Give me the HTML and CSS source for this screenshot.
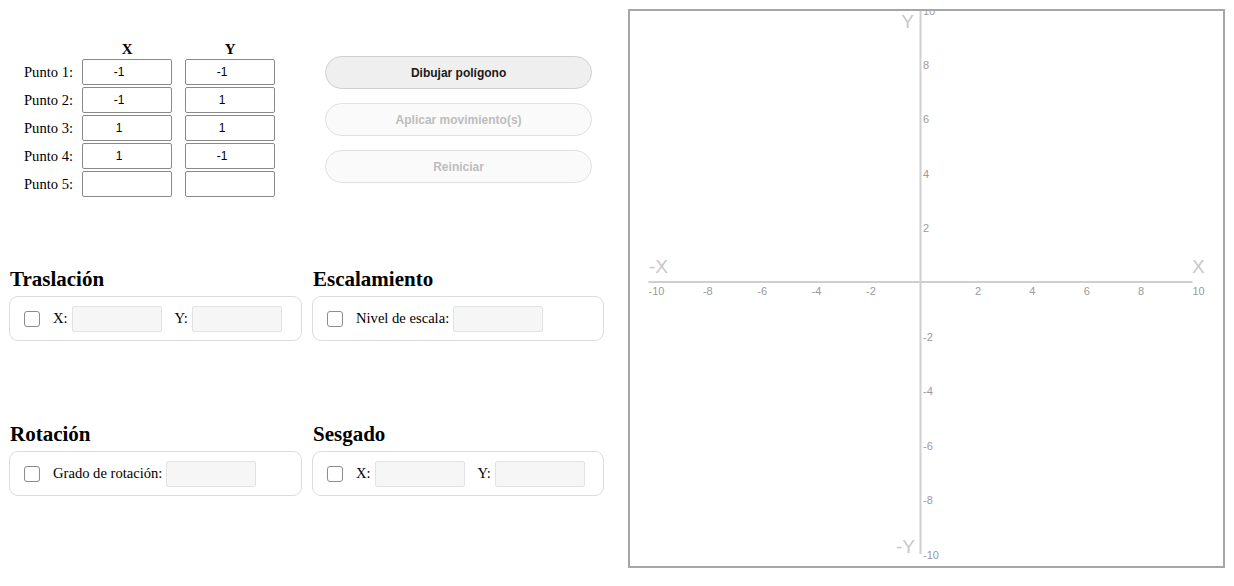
FILE: index.html
```html
<!DOCTYPE html>
<html lang="es">
<head>
<meta charset="utf-8">
<title>Transformaciones</title>
<link rel="stylesheet" href="styles.css">
</head>
<body>
<div class="page">
  <div class="left">
    <div class="top">
      <table class="pts">
        <tr><th class="lbl"></th><th>X</th><th class="c2">Y</th></tr>
        <tr><td class="lbl">Punto 1:</td><td><input class="num" type="text" value="-1"></td><td class="c2"><input class="num" type="text" value="-1"></td></tr>
        <tr><td class="lbl">Punto 2:</td><td><input class="num" type="text" value="-1"></td><td class="c2"><input class="num" type="text" value="1"></td></tr>
        <tr><td class="lbl">Punto 3:</td><td><input class="num" type="text" value="1"></td><td class="c2"><input class="num" type="text" value="1"></td></tr>
        <tr><td class="lbl">Punto 4:</td><td><input class="num" type="text" value="1"></td><td class="c2"><input class="num" type="text" value="-1"></td></tr>
        <tr><td class="lbl">Punto 5:</td><td><input class="num" type="text" value=""></td><td class="c2"><input class="num" type="text" value=""></td></tr>
      </table>
      <div class="btns">
        <button class="btn">Dibujar polígono</button>
        <button class="btn" disabled>Aplicar movimiento(s)</button>
        <button class="btn" disabled>Reiniciar</button>
      </div>
    </div>
    <div class="ops">
      <section class="op">
        <h3>Traslación</h3>
        <div class="box"><span class="chk"></span><label class="lab">X:</label><input class="field" type="text"><label class="lab gap">Y:</label><input class="field" type="text"></div>
      </section>
      <section class="op">
        <h3>Escalamiento</h3>
        <div class="box"><span class="chk"></span><label class="lab">Nivel de escala:</label><input class="field" type="text"></div>
      </section>
      <section class="op">
        <h3>Rotación</h3>
        <div class="box"><span class="chk"></span><label class="lab">Grado de rotación:</label><input class="field" type="text"></div>
      </section>
      <section class="op">
        <h3>Sesgado</h3>
        <div class="box"><span class="chk"></span><label class="lab">X:</label><input class="field" type="text"><label class="lab gap">Y:</label><input class="field" type="text"></div>
      </section>
    </div>
  </div>
  <div class="graph">
    <svg class="plane" width="593" height="555" viewBox="0 0 593 555" xmlns="http://www.w3.org/2000/svg">
      <line x1="18.5" y1="271" x2="562.5" y2="271" class="axis"/>
      <line x1="290.5" y1="0" x2="290.5" y2="543" class="axis"/>
      <g class="tick">
        <text x="18.5" y="284">-10</text>
        <text x="72.9" y="284">-8</text>
        <text x="127.3" y="284">-6</text>
        <text x="181.7" y="284">-4</text>
        <text x="236.1" y="284">-2</text>
        <text x="344.9" y="284">2</text>
        <text x="399.3" y="284">4</text>
        <text x="453.7" y="284">6</text>
        <text x="508.1" y="284">8</text>
        <text x="562.5" y="284">10</text>
        <text x="293" y="3.5">10</text>
        <text x="293" y="57.9">8</text>
        <text x="293" y="112.3">6</text>
        <text x="293" y="166.7">4</text>
        <text x="293" y="221.1">2</text>
        <text x="293" y="329.9">-2</text>
        <text x="293" y="384.3">-4</text>
        <text x="293" y="438.7">-6</text>
        <text x="293" y="493.1">-8</text>
        <text x="293" y="547.5">-10</text>
      </g>
      <g class="big">
        <text x="19" y="262">-X</text>
        <text x="562" y="262">X</text>
        <text x="284" y="17" text-anchor="end">Y</text>
        <text x="285" y="542" text-anchor="end">-Y</text>
      </g>
    </svg>
  </div>
</div>
</body>
</html>
```
FILE: styles.css
```css
body {
  margin: 0;
  background: #fff;
  color: #000;
  font-family: "Liberation Serif", "Times New Roman", serif;
}

.page {
  display: flex;
  align-items: flex-start;
  gap: 24px;
  padding: 9px 0 0 9px;
}

.left {
  width: 595px;
  flex: none;
}

.top {
  display: flex;
  align-items: flex-start;
  padding: 30px 0 0 15px;
}

.pts {
  border-collapse: separate;
  border-spacing: 0;
}

.pts th {
  font-size: 15px;
  font-weight: bold;
  line-height: 17px;
  padding: 2px 0 0;
  text-align: center;
}

.pts td {
  padding: 1px 0;
  vertical-align: middle;
}

.pts .lbl {
  width: 49px;
  padding-right: 9px;
  text-align: right;
  white-space: nowrap;
  font-size: 14.6px;
}

.pts .c2 {
  padding-left: 13px;
}

.num {
  display: block;
  width: 90px;
  height: 26px;
  box-sizing: border-box;
  margin: 0;
  padding: 0 16px 0 0;
  border: 1px solid #8a8a8a;
  border-radius: 2px;
  background: #fff;
  color: #000;
  font: 12px "Liberation Sans", Arial, sans-serif;
  text-align: center;
}

.btns {
  display: flex;
  flex-direction: column;
  gap: 14px;
  margin: 17px 0 0 50px;
}

.btn {
  width: 267px;
  height: 33px;
  box-sizing: border-box;
  border: 1px solid #cfcfcf;
  border-radius: 17px;
  background: #efefef;
  color: #1a1a1a;
  font: bold 12px "Liberation Sans", Arial, sans-serif;
  padding: 0;
}

.btn:disabled {
  background: #fafafa;
  border-color: #e0e0e0;
  color: #bdbdbd;
}

.ops {
  display: grid;
  grid-template-columns: 293px 292px;
  column-gap: 10px;
  row-gap: 81px;
  margin-top: 69px;
}

.op h3 {
  margin: 0 0 5px 1px;
  font-size: 21px;
  line-height: 24px;
  font-weight: bold;
}

.box {
  display: flex;
  align-items: center;
  height: 45px;
  box-sizing: border-box;
  padding: 0 14px;
  border: 1px solid #dcdcdc;
  border-radius: 9px;
}

.chk {
  width: 16px;
  height: 16px;
  box-sizing: border-box;
  border: 1px solid #8c8c8c;
  border-radius: 3px;
  background: #fff;
  margin-right: 13px;
  flex: none;
}

.lab {
  font-size: 14.6px;
  margin-right: 4px;
  white-space: nowrap;
}

.lab.gap {
  margin-left: 13px;
}

.field {
  width: 90px;
  height: 26px;
  box-sizing: border-box;
  margin: 0;
  padding: 0 4px;
  border: 1px solid #e2e2e2;
  border-radius: 2px;
  background: #f6f6f6;
  font: 12px "Liberation Sans", Arial, sans-serif;
}

.graph {
  width: 597px;
  height: 559px;
  box-sizing: border-box;
  border: 2px solid #a6a6a6;
  flex: none;
  background: #fff;
}

.plane {
  display: block;
}

.axis {
  stroke: #cfcfcf;
  stroke-width: 2;
}

.tick text {
  font: 11px "Liberation Sans", Arial, sans-serif;
  fill: #9a9a9a;
}

.big text {
  font: 19px "Liberation Sans", Arial, sans-serif;
  fill: #c8c8c8;
}
```
